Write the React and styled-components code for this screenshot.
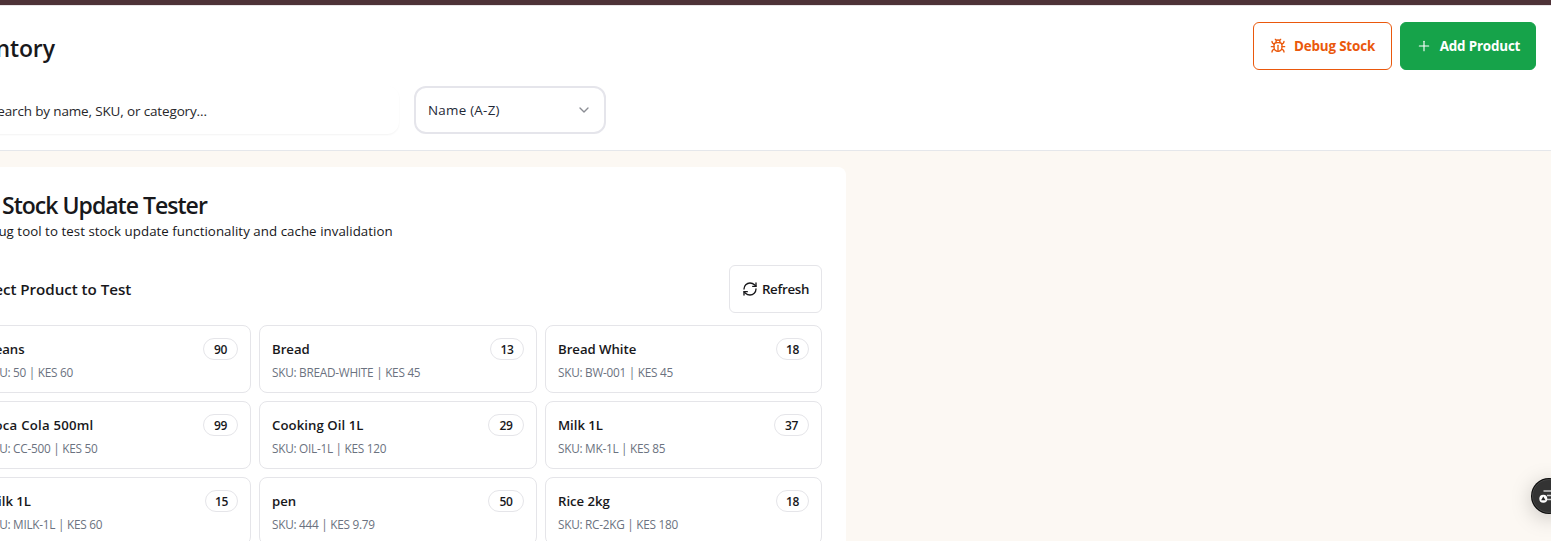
import React from "react";
import styled, { createGlobalStyle } from "styled-components";
import { Bug, ChevronDown, Plus, RefreshCw } from "lucide-react";

const GlobalStyle = createGlobalStyle`
  * { box-sizing: border-box; }
  html, body { margin: 0; height: 100%; overflow: hidden; }
  body { background: #fcf8f3; color: #18181b; font-family: "Open Sans", "Noto Sans", sans-serif; }
  button { font-family: inherit; }
`;

const Viewport = styled.div`
  width: 1551px;
  height: 541px;
  overflow: hidden;
  background: #fcf8f3;
`;

const Page = styled.div`
  width: 1618px;
  margin-left: -67px;
`;

const TopStrip = styled.div`
  height: 5px;
  background: #4e3237;
`;

const Header = styled.header`
  display: flex;
  flex-direction: column;
  gap: 16px;
  height: 146px;
  padding: 16px 15px 16px 16px;
  background: #fff;
  border-top: 1px solid #e8e5e7;
  border-bottom: 1px solid #e5e7eb;
`;

const HeaderRow = styled.div`
  display: flex;
  align-items: center;
  gap: 15px;
  height: 48px;
`;

const Text = styled.span`
  white-space: pre;
  font-size: ${(p) => p.$size}px;
  font-weight: ${(p) => p.$weight || 400};
  line-height: ${(p) => p.$line}px;
  letter-spacing: ${(p) => p.$track || 0}px;
  color: ${(p) => p.$color || "inherit"};
`;

const PageTitle = styled(Text).attrs({ as: "h1" })`
  margin: 0;
  padding-top: 3px;
`;

const Actions = styled.div`
  display: flex;
  gap: 8px;
  margin-left: auto;
`;

const Button = styled.button`
  display: flex;
  align-items: center;
  justify-content: center;
  gap: ${(p) => p.$gap}px;
  width: ${(p) => p.$width}px;
  height: 48px;
  padding: 0;
  border: 1px solid ${(p) => p.$border};
  border-radius: 6px;
  background: ${(p) => p.$fill || "#fff"};
  color: ${(p) => p.$ink};
`;

const SearchBox = styled.div`
  display: flex;
  align-items: center;
  width: 450px;
  height: 48px;
  padding: 2px 0 0 41px;
  border-radius: 12px;
  box-shadow: 0 1px 2px rgba(0, 0, 0, 0.05);
`;

const Select = styled.div`
  display: flex;
  align-items: center;
  justify-content: space-between;
  width: 192px;
  height: 48px;
  padding: 0 12px;
  border: 2px solid #e5e5eb;
  border-radius: 12px;
  color: #1f2937;
`;

const Panel = styled.main`
  display: flex;
  flex-direction: column;
  width: 897px;
  margin: 16px 0 0 16px;
  padding: 24px;
  border-radius: 8px;
  background: #fff;
`;

const PanelHead = styled.div`
  display: flex;
  flex-direction: column;
  height: 74px;
  padding-top: 2px;
`;

const TitleLine = styled.div`
  display: flex;
  align-items: center;
  gap: 5px;
  height: 24px;
`;

const Subtitle = styled.div`
  height: 20px;
  margin-top: 2px;
`;

const SectionHead = styled.div`
  display: flex;
  align-items: center;
  justify-content: space-between;
  height: 48px;
  margin-bottom: 12px;
`;

const Grid = styled.div`
  display: grid;
  grid-template-columns: 278px 278px 277px;
  grid-auto-rows: 68px;
  gap: 8px;
`;

const Card = styled.article`
  display: flex;
  justify-content: space-between;
  align-items: flex-start;
  padding: 12px;
  border: 1px solid #e5e5e9;
  border-radius: 8px;
`;

const CardText = styled.div`
  display: flex;
  flex-direction: column;
  gap: 4px;
`;

const Badge = styled.span`
  display: flex;
  align-items: center;
  justify-content: center;
  width: ${(p) => p.$width}px;
  height: 22px;
  padding-top: 1px;
  border: 1px solid #e5e5e9;
  border-radius: 11px;
`;

const Floating = styled.div`
  position: absolute;
  left: 1531px;
  top: 478px;
  width: 20px;
  height: 36px;
  svg { display: block; overflow: visible; filter: drop-shadow(0 4px 10px rgba(0, 0, 0, 0.2)); }
`;

const Clip = styled.div`
  position: absolute;
  inset: 0;
  overflow: hidden;
  pointer-events: none;
`;

const products = [
  { name: "Beans", sku: "SKU: 50 | KES 60", stock: "90", badge: 35 },
  { name: "Bread", sku: "SKU: BREAD-WHITE | KES 45", stock: "13", badge: 34 },
  { name: "Bread White", sku: "SKU: BW-001 | KES 45", stock: "18", badge: 33 },
  { name: "Coca Cola 500ml", sku: "SKU: CC-500 | KES 50", stock: "99", badge: 35, nameTrack: 0.22 },
  { name: "Cooking Oil 1L", sku: "SKU: OIL-1L | KES 120", stock: "29", badge: 36, nameTrack: 0.06 },
  { name: "Milk 1L", sku: "SKU: MK-1L | KES 85", stock: "37", badge: 35 },
  { name: "Milk 1L", sku: "SKU: MILK-1L | KES 60", stock: "15", badge: 33 },
  { name: "pen", sku: "SKU: 444 | KES 9.79", stock: "50", badge: 36 },
  { name: "Rice 2kg", sku: "SKU: RC-2KG | KES 180", stock: "18", badge: 33 },
];

function ProductCard({ item }) {
  return (
    <Card>
      <CardText>
        <Text $size={13.2} $weight={600} $line={22} $track={item.nameTrack ?? -0.03}>{item.name}</Text>
        <Text $size={11.8} $line={16} $track={-0.27} $color="#6b7280">{item.sku}</Text>
      </CardText>
      <Badge $width={item.badge}>
        <Text $size={12} $weight={600} $line={16} $track={-0.4}>{item.stock}</Text>
      </Badge>
    </Card>
  );
}

export default function App() {
  return (
    <Viewport>
      <GlobalStyle />
      <Page>
        <TopStrip />
        <Header>
          <HeaderRow>
            <PageTitle $size={23} $weight={600} $line={32} $track={-0.15}>Inventory</PageTitle>
            <Actions>
              <Button $width={139} $gap={8} $border="#ea580c" $ink="#ea580c">
                <Bug size={16} strokeWidth={2} />
                <Text $size={13.4} $weight={700} $line={20} $track={-0.15}>Debug Stock</Text>
              </Button>
              <Button $width={136} $gap={8} $border="#16a34a" $fill="#16a34a" $ink="#fff">
                <Plus size={16} strokeWidth={1.7} />
                <Text $size={13.4} $weight={700} $line={20} $track={-0.17}>Add Product</Text>
              </Button>
            </Actions>
          </HeaderRow>
          <HeaderRow>
            <SearchBox>
              <Text $size={13.5} $line={20} $track={-0.15} $color="#27272a">Search by name, SKU, or category...</Text>
            </SearchBox>
            <Select>
              <Text $size={13.4} $line={20} $track={0.25}>Name (A-Z)</Text>
              <ChevronDown size={16} color="#8b8d94" />
            </Select>
          </HeaderRow>
        </Header>
        <Panel>
          <PanelHead>
            <TitleLine>
              <Bug size={24} />
              <Text $size={23} $weight={600} $line={24} $track={-0.98}>Stock Update Tester</Text>
            </TitleLine>
            <Subtitle>
              <Text $size={13.3} $line={20} $track={0.045}>Debug tool to test stock update functionality and cache invalidation</Text>
            </Subtitle>
          </PanelHead>
          <SectionHead>
            <Text $size={15.2} $weight={600} $line={24} $track={-0.05}>Select Product to Test</Text>
            <Button $width={93} $gap={4} $border="#e5e5e9" $ink="#18181b">
              <RefreshCw size={16} />
              <Text $size={13.3} $weight={600} $line={20} $track={-0.3}>Refresh</Text>
            </Button>
          </SectionHead>
          <Grid>
            {products.map((item, i) => <ProductCard key={i} item={item} />)}
          </Grid>
        </Panel>
      </Page>
      <Clip>
        <Floating>
          <svg width="36" height="36" viewBox="0 0 36 36">
            <circle cx="18" cy="18" r="18" fill="#0c0c0c" />
            <circle cx="18" cy="18" r="16.5" fill="#333" stroke="#555" strokeWidth="0.7" />
            <path d="M12.5 13h12.5M16 17.5h9M16 21.5h8" fill="none" stroke="#ccc" strokeWidth="1.4" />
            <circle cx="12.3" cy="20.7" r="4" fill="#fff" />
            <path d="M12.3 18.4l2.2 3.8h-4.4z" fill="#222" />
          </svg>
        </Floating>
      </Clip>
    </Viewport>
  );
}
